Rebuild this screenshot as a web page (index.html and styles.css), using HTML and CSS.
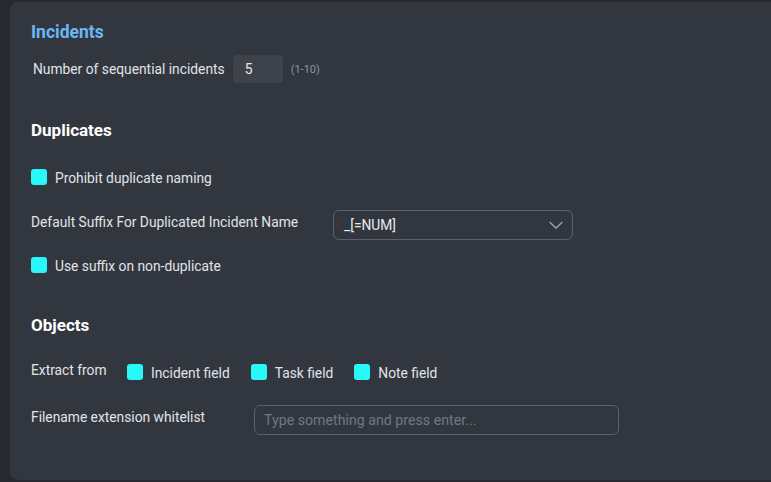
FILE: index.html
```html
<!DOCTYPE html>
<html>
<head>
<meta charset="utf-8">
<link rel="stylesheet" href="styles.css">
</head>
<body>
<div class="page">
  <div class="panel">
    <h2 class="title title-blue">Incidents</h2>
    <div class="row row-num">
      <span class="label label-num">Number of sequential incidents</span>
      <div class="num-input">5</div>
      <span class="hint">(1-10)</span>
    </div>

    <h2 class="title title-dup">Duplicates</h2>
    <div class="check-row row-prohibit">
      <span class="box"></span>
      <span class="check-label">Prohibit duplicate naming</span>
    </div>
    <div class="row row-suffix">
      <span class="label label-suffix">Default Suffix For Duplicated Incident Name</span>
      <div class="select">
        <span class="select-value">_[=NUM]</span>
        <svg class="chevron" width="16" height="10" viewBox="0 0 16 10"><polyline points="1.5,2 8,8 14.5,2" fill="none" stroke="#9ba4b0" stroke-width="1.4"/></svg>
      </div>
    </div>
    <div class="check-row row-nondup">
      <span class="box"></span>
      <span class="check-label">Use suffix on non-duplicate</span>
    </div>

    <h2 class="title title-obj">Objects</h2>
    <div class="row row-extract">
      <span class="label label-extract">Extract from</span>
      <div class="option"><span class="box"></span><span class="opt-label">Incident field</span></div>
      <div class="option"><span class="box"></span><span class="opt-label">Task field</span></div>
      <div class="option"><span class="box"></span><span class="opt-label">Note field</span></div>
    </div>
    <div class="row row-file">
      <span class="label label-file">Filename extension whitelist</span>
      <div class="text-input">Type something and press enter...</div>
    </div>
  </div>
</div>
</body>
</html>
```

FILE: styles.css
```css
* { box-sizing: border-box; }
html, body {
  margin: 0;
  padding: 0;
  background: #262a2f;
  font-family: Roboto, "Liberation Sans", sans-serif;
  color: #e1e3e7;
  width: 771px;
  height: 482px;
  overflow: hidden;
}
.page {
  padding: 2px 0 0 10px;
}
.panel {
  background: #32373f;
  border-radius: 8px 0 0 8px;
  height: 478px;
  padding: 20px 0 0 21px;
  display: flex;
  flex-direction: column;
}
.title {
  margin: 0;
  font-size: 17px;
  line-height: 20px;
  font-weight: 700;
  color: #ffffff;
}
.title-blue { color: #6bb7f2; font-size: 17.5px; }
.row {
  display: flex;
  align-items: flex-start;
}
.label {
  font-size: 13.8px;
  line-height: 16px;
  color: #e1e3e7;
}
.row-num {
  margin-top: 13px;
  align-items: center;
}
.label-num { margin-left: 2px; margin-right: 8px; }
.num-input {
  width: 50px;
  height: 28px;
  background: #3d424b;
  border-radius: 4px;
  font-size: 13.8px;
  line-height: 28px;
  padding-left: 12px;
  color: #e8eaee;
}
.hint {
  margin-left: 8px;
  font-size: 11px;
  color: #8b95a4;
}
.title-dup { margin-top: 37px; }
.check-row {
  display: flex;
  align-items: center;
  height: 16px;
}
.box {
  width: 16px;
  height: 16px;
  border-radius: 3px;
  background: #29f8f8;
  flex: none;
}
.check-label {
  margin-left: 8px;
  font-size: 13.8px;
  line-height: 16px;
  padding-top: 2px;
}
.row-prohibit { margin-top: 29px; }
.row-suffix { margin-top: 25px; }
.label-suffix {
  width: 302px;
  padding-top: 4px;
}
.select {
  width: 240px;
  height: 30px;
  border: 1px solid #5b626d;
  border-radius: 6px;
  display: flex;
  align-items: center;
  justify-content: space-between;
  padding: 0 8px 0 10px;
}
.select-value {
  font-size: 13.8px;
  color: #e8eaee;
}
.row-nondup { margin-top: 17px; }
.title-obj { margin-top: 42px; }
.row-extract { margin-top: 27px; }
.label-extract { width: 96px; }
.option {
  display: flex;
  align-items: flex-start;
  margin-top: 2px;
  margin-right: 21px;
}
.opt-label {
  margin-left: 8px;
  font-size: 13.8px;
  line-height: 16px;
  padding-top: 1px;
}
.row-file { margin-top: 24px; }
.label-file {
  width: 223px;
  padding-top: 4px;
}
.text-input {
  width: 365px;
  height: 30px;
  border: 1px solid #5b626d;
  border-radius: 6px;
  font-size: 14.2px;
  line-height: 28px;
  padding-left: 9px;
  color: #6e7785;
}
```
